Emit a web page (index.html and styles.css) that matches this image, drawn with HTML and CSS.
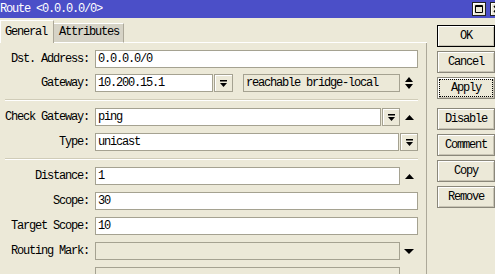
FILE: index.html
```html
<!DOCTYPE html>
<html lang="en">
<head>
    <meta charset="UTF-8">
    <title>Route</title>
    <link rel="stylesheet" href="styles.css">
</head>
<body>
    <div class="titlebar">
        <span class="title">Route &lt;0.0.0.0/0&gt;</span>
        <div class="tb-btns">
            <div class="tb-btn"><svg width="8" height="8" viewBox="0 0 8 8"><path d="M0.5 0.5h7v7h-7z M0 1.5h8" fill="none" stroke="#000" stroke-width="1"/></svg></div>
            <div class="tb-btn"><svg width="8" height="8" viewBox="0 0 8 8"><path d="M1 1l6 6M7 1l-6 6" stroke="#000" stroke-width="1.6"/></svg></div>
        </div>
    </div>

    <div class="layout">
        <div class="main">
            <div class="tabs">
                <div class="tab active">General</div>
                <div class="tab">Attributes</div>
                <div class="tab-fill"></div>
            </div>

            <div class="panel">
                <div class="row first">
                    <div class="label">Dst. Address:</div>
                    <div class="ctl"><div class="input">0.0.0.0/0</div></div>
                </div>
                <div class="row">
                    <div class="label">Gateway:</div>
                    <div class="ctl">
                        <div class="input gw">10.200.15.1</div>
                        <div class="dd-btn wide"><svg width="7" height="7" viewBox="0 0 7 7"><path d="M0 0h7v1.5H0z M0 3h7L3.5 7z"/></svg></div>
                        <div class="input state">reachable bridge-local</div>
                        <div class="icon"><svg width="8" height="12" viewBox="0 0 8 12"><path d="M0 5h8L4 0z M0 7h8L4 12z"/></svg></div>
                    </div>
                </div>

                <div class="sep"></div>

                <div class="row">
                    <div class="label">Check Gateway:</div>
                    <div class="ctl">
                        <div class="input">ping</div>
                        <div class="dd-btn"><svg width="7" height="7" viewBox="0 0 7 7"><path d="M0 0h7v1.5H0z M0 3h7L3.5 7z"/></svg></div>
                        <div class="icon"><svg width="9" height="5" viewBox="0 0 9 5"><path d="M0 5h9L4.5 0z"/></svg></div>
                    </div>
                </div>
                <div class="row">
                    <div class="label">Type:</div>
                    <div class="ctl">
                        <div class="input">unicast</div>
                        <div class="dd-btn"><svg width="7" height="7" viewBox="0 0 7 7"><path d="M0 0h7v1.5H0z M0 3h7L3.5 7z"/></svg></div>
                    </div>
                </div>

                <div class="sep"></div>

                <div class="row">
                    <div class="label">Distance:</div>
                    <div class="ctl">
                        <div class="input">1</div>
                        <div class="icon"><svg width="9" height="5" viewBox="0 0 9 5"><path d="M0 5h9L4.5 0z"/></svg></div>
                    </div>
                </div>
                <div class="row">
                    <div class="label">Scope:</div>
                    <div class="ctl"><div class="input">30</div></div>
                </div>
                <div class="row">
                    <div class="label">Target Scope:</div>
                    <div class="ctl"><div class="input">10</div></div>
                </div>
                <div class="row">
                    <div class="label">Routing Mark:</div>
                    <div class="ctl">
                        <div class="input off"></div>
                        <div class="icon"><svg width="10" height="5" viewBox="0 0 10 5"><path d="M0 0h10L5 5z"/></svg></div>
                    </div>
                </div>
                <div class="row">
                    <div class="label"></div>
                    <div class="ctl">
                        <div class="input off"></div>
                        <div class="icon"></div>
                    </div>
                </div>
            </div>
        </div>

        <div class="buttons">
            <div class="btn default">OK</div>
            <div class="btn">Cancel</div>
            <div class="btn focus">Apply</div>
            <div class="btn group">Disable</div>
            <div class="btn">Comment</div>
            <div class="btn">Copy</div>
            <div class="btn">Remove</div>
        </div>
    </div>
</body>
</html>
```

FILE: styles.css
```css
body {
    margin: 0;
    width: 495px;
    height: 274px;
    overflow: hidden;
    background: #ece9d8;
    color: #000;
    font-family: "Liberation Mono", monospace;
    font-size: 12px;
    letter-spacing: -1.2px;
}
.titlebar {
    height: 18px;
    background: #4b4fc8;
    color: #fff;
    display: flex;
    align-items: center;
    justify-content: space-between;
}
.tb-btns {
    display: flex;
    gap: 4px;
    margin-right: -9px;
}
.tb-btn {
    width: 14px;
    height: 14px;
    box-sizing: border-box;
    border: 1px solid #222;
    background: #ece9d8;
    box-shadow: inset 1px 1px #fff;
    display: flex;
    align-items: center;
    justify-content: center;
}
.layout {
    display: flex;
}
.main {
    width: 429px;
    height: 256px;
    display: flex;
    flex-direction: column;
}
.tabs {
    height: 25px;
    display: flex;
    align-items: flex-end;
}
.tab {
    box-sizing: border-box;
    width: 70px;
    height: 20px;
    padding-left: 5px;
    line-height: 17px;
    background: #d6d3c6;
    border-top: 1px solid #fff;
    border-right: 1px solid #aca899;
    border-bottom: 1px solid #fff;
}
.tab.active {
    width: 54px;
    height: 23px;
    padding-left: 4px;
    line-height: 22px;
    background: #ece9d8;
    border-left: 1px solid #fff;
    border-bottom: none;
}
.tab-fill {
    flex: 1;
    border-bottom: 1px solid #fff;
}
.panel {
    flex: 1;
    padding: 7px 8px 0 0;
    border-right: 1px solid #aca899;
    overflow: hidden;
}
.row {
    display: grid;
    grid-template-columns: 89px 1fr;
    column-gap: 6px;
    align-items: center;
    height: 18px;
    margin-bottom: 7px;
}
.row.first {
    margin-bottom: 6px;
}
.label {
    text-align: right;
    white-space: nowrap;
}
.ctl {
    display: flex;
    align-items: center;
    height: 18px;
}
.input {
    flex: 1;
    box-sizing: border-box;
    height: 18px;
    padding-left: 2px;
    line-height: 16px;
    background: #fff;
    border: 1px solid #a5a291;
    white-space: nowrap;
}
.input.gw {
    flex: none;
    width: 118px;
}
.input.state {
    margin-left: 10px;
    background: #ece9d8;
}
.input.off {
    background: #ece9d8;
}
.dd-btn {
    box-sizing: border-box;
    width: 18px;
    height: 18px;
    margin-left: 1px;
    border: 1px solid #a5a291;
    box-shadow: inset 1px 1px #fff;
    display: flex;
    align-items: center;
    justify-content: center;
}
.dd-btn.wide {
    width: 19px;
}
.icon {
    width: 18px;
    height: 18px;
    display: flex;
    align-items: center;
    justify-content: center;
}
.sep {
    height: 0;
    margin: 2px 0 7px 5px;
    border-top: 1px solid #d0ccb8;
    border-bottom: 1px solid #fff;
}
.buttons {
    padding: 7px 0 0 10px;
}
.btn {
    box-sizing: border-box;
    width: 58px;
    height: 22px;
    margin-bottom: 4px;
    line-height: 20px;
    text-align: center;
    border: 1px solid #8a877a;
    box-shadow: inset 1px 1px #fff, inset -1px -1px #c8c4b4;
}
.btn.default {
    border-color: #000;
}
.btn.focus {
    outline: 1px dotted #000;
    outline-offset: -3px;
}
.btn.group {
    margin-top: 9px;
}
```
